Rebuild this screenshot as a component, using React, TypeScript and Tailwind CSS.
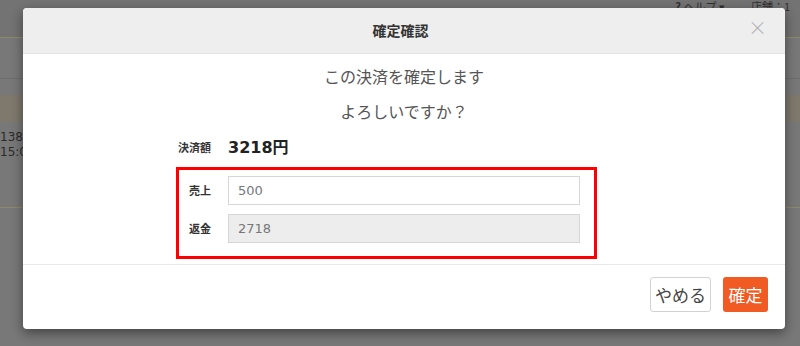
import React from "react";

const jp = { fontFamily: '"Noto Sans CJK JP", "Noto Sans", sans-serif' };
const num = { fontFamily: '"DejaVu Sans", "Noto Sans CJK JP", sans-serif' };

const Field: React.FC<{ label: string; value: string; readOnly?: boolean }> = ({
  label,
  value,
  readOnly,
}) => (
  <div className="flex items-center">
    <span className="w-[39px] text-[11px] font-bold text-[#333]">{label}</span>
    <input
      readOnly
      value={value}
      style={num}
      className={`h-[29px] w-[352px] border border-[#d6d6d6] px-[9px] text-[13px] text-[#777] outline-none ${
        readOnly ? "bg-[#ededed]" : "bg-white"
      }`}
    />
  </div>
);

export default function App() {
  return (
    <div
      className="relative h-[346px] w-[800px] overflow-hidden bg-[#787878]"
      style={jp}
    >
      {/* page behind the dialog */}
      <div className="flex h-[38px] items-start justify-end gap-[26px] border-b border-[#8c8b68] bg-[#737373] pr-[10px] text-[11px] leading-[12px] text-[#2f2f2f]">
        <span>
          <b>?</b> ヘルプ ▾
        </span>
        <span>店舗：1</span>
      </div>
      <div className="h-[41px] border-b border-[#6e6e6e]" />
      <div className="h-[16px]" />
      <div className="h-[27px] bg-[#7e786d]" />
      <div className="pt-[8px] text-[12px] leading-[15px] text-[#2a2a2a]" style={num}>
        <div>1383</div>
        <div>15:00</div>
      </div>
      <div className="mt-[47px] border-b border-[#8c8b68]" />

      {/* dialog */}
      <div className="absolute inset-0 pl-[23px] pt-[8px]">
        <div className="flex h-[321px] w-[762px] flex-col overflow-hidden rounded-[4px] bg-white shadow-[0_4px_12px_rgba(0,0,0,0.45)]">
          <div className="flex h-[46px] items-center border-b border-[#e3e3e3] bg-[#eeeeee] pl-[20px] pr-[18px]">
            <div className="flex-1 pl-[10px] text-center text-[14px] font-bold text-[#333]">
              確定確認
            </div>
            <span className="-mt-[8px] text-[19px] leading-none font-light text-[#b0b0b0]">×</span>
          </div>

          <div className="flex h-[211px] flex-col border-b border-[#e8e8e8]">
            <div className="mt-[11px] text-center text-[16px] leading-[22px] text-[#555]">
              この決済を確定します
            </div>
            <div className="mt-[13px] text-center text-[16px] leading-[22px] text-[#555]">
              よろしいですか？
            </div>
            <div className="ml-[155px] mt-[12px] flex items-center">
              <span className="w-[50px] text-[11px] font-bold text-[#333]">決済額</span>
              <span className="text-[16px] font-bold text-[#222]" style={num}>
                3218<span style={jp}>円</span>
              </span>
            </div>
            <div className="ml-[153px] mt-[7px] flex h-[92px] w-[421px] flex-col gap-[9px] border-[3px] border-[#ff0000] pl-[10px] pt-[6px]">
              <Field label="売上" value="500" />
              <Field label="返金" value="2718" readOnly />
            </div>
          </div>

          <div className="flex justify-end gap-[12px] pr-[17px] pt-[12px]">
            <button className="h-[35px] w-[61px] rounded-[3px] border border-[#d2d2d2] bg-white text-[17px] text-[#444]">
              やめる
            </button>
            <button className="h-[35px] w-[45px] rounded-[3px] bg-[#f15a22] text-[17px] text-white">
              確定
            </button>
          </div>
        </div>
      </div>
    </div>
  );
}
